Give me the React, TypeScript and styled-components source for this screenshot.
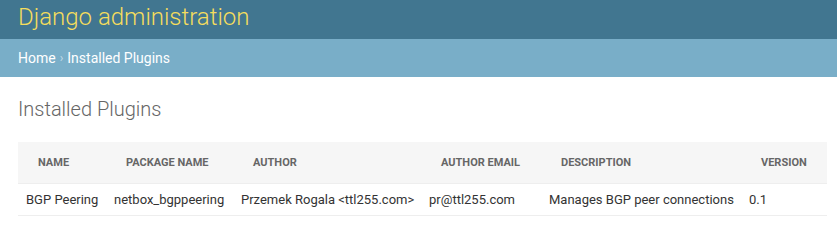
import React from 'react';
import styled, { createGlobalStyle } from 'styled-components';

const GlobalStyle = createGlobalStyle`
  html, body {
    margin: 0;
    padding: 0;
    background: #fff;
    font-family: Roboto, 'Liberation Sans', sans-serif;
    color: #333;
  }
`;

type Plugin = {
  name: string;
  packageName: string;
  author: string;
  email: string;
  description: string;
  version: string;
};

const plugins: Plugin[] = [
  {
    name: 'BGP Peering',
    packageName: 'netbox_bgppeering',
    author: 'Przemek Rogala <ttl255.com>',
    email: 'pr@ttl255.com',
    description: 'Manages BGP peer connections',
    version: '0.1',
  },
];

const columns = [
  { label: 'Name', width: 88 },
  { label: 'Package name', width: 127 },
  { label: 'Author', width: 188 },
  { label: 'Author email', width: 120 },
  { label: 'Description', width: 200 },
  { label: 'Version', width: 86 },
];

const App = () => {
  return (
    <>
      <GlobalStyle />
      <Header>
        <Branding>Django administration</Branding>
      </Header>
      <Breadcrumbs>
        <Crumb href="#">Home</Crumb>
        <Separator>›</Separator>
        Installed Plugins
      </Breadcrumbs>
      <Content>
        <Title>Installed Plugins</Title>
        <Table>
          <colgroup>
            {columns.map((c) => (
              <col key={c.label} style={{ width: c.width }} />
            ))}
          </colgroup>
          <thead>
            <tr>
              {columns.map((c) => (
                <Th key={c.label}>{c.label}</Th>
              ))}
            </tr>
          </thead>
          <tbody>
            {plugins.map((p) => (
              <tr key={p.packageName}>
                <Td>{p.name}</Td>
                <Td>{p.packageName}</Td>
                <Td>{p.author}</Td>
                <Td>{p.email}</Td>
                <Td>{p.description}</Td>
                <Td>{p.version}</Td>
              </tr>
            ))}
          </tbody>
        </Table>
      </Content>
    </>
  );
};

export default App;

const Header = styled.div`
  height: 39px;
  background: #417690;
  padding: 0 18px;
  display: flex;
  align-items: center;
`;

const Branding = styled.h1`
  margin: 0;
  font-size: 24px;
  font-weight: 300;
  color: #f5dd5d;
  position: relative;
  top: -3px;
`;

const Breadcrumbs = styled.div`
  height: 38px;
  background: #79aec8;
  padding: 0 18px;
  display: flex;
  align-items: center;
  font-size: 14px;
  color: #fff;
`;

const Crumb = styled.a`
  color: #fff;
  text-decoration: none;
`;

const Separator = styled.span`
  color: #c4dce8;
  margin: 0 4px;
  font-size: 12px;
`;

const Content = styled.div`
  padding: 20px 10px 0 18px;
`;

const Title = styled.h1`
  margin: 0 0 21px;
  font-size: 20px;
  font-weight: 300;
  color: #666;
  line-height: 24px;
`;

const Table = styled.table`
  width: 809px;
  border-collapse: collapse;
  table-layout: fixed;
`;

const Th = styled.th`
  background: #f6f6f6;
  height: 41px;
  padding: 0 8px 0 20px;
  text-align: left;
  font-size: 11px;
  font-weight: 700;
  text-transform: uppercase;
  color: #666;
  border-bottom: 1px solid #eee;
  white-space: nowrap;
`;

const Td = styled.td`
  height: 31px;
  padding: 0 8px;
  font-size: 13px;
  color: #333;
  border-bottom: 1px solid #eee;
  white-space: nowrap;
`;
